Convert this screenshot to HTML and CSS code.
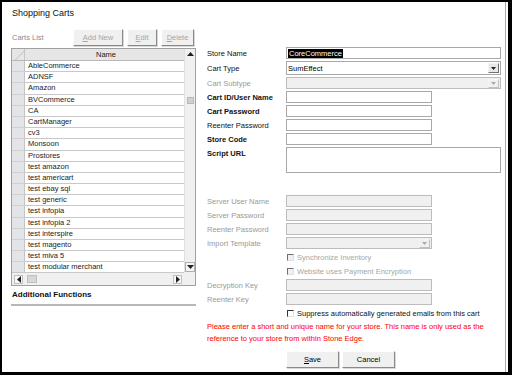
FILE: index.html
```html
<!DOCTYPE html>
<html lang="en">
<head>
  <meta charset="UTF-8" />
  <title>Shopping Carts</title>
  <link rel="stylesheet" href="styles.css">
</head>
<body>
  <div class="window">
    <div class="frame">
      <h1 class="title">Shopping Carts</h1>

      <div class="content">
        <div class="left">
          <div class="toolbar">
            <span class="list-label">Carts List</span>
            <div class="tool-buttons">
              <button class="btn btn-disabled w-add"><u>A</u>dd New</button>
              <button class="btn btn-disabled w-edit"><u>E</u>dit</button>
              <button class="btn btn-disabled w-del"><u>D</u>elete</button>
            </div>
          </div>

          <div class="grid">
            <div class="grid-body">
              <div class="grid-row grid-head">
                <div class="sel sel-corner"></div>
                <div class="cell head-cell">Name</div>
              </div>
              <div class="grid-row"><div class="sel"></div><div class="cell">AbleCommerce</div></div>
              <div class="grid-row"><div class="sel"></div><div class="cell">ADNSF</div></div>
              <div class="grid-row"><div class="sel"></div><div class="cell">Amazon</div></div>
              <div class="grid-row"><div class="sel"></div><div class="cell">BVCommerce</div></div>
              <div class="grid-row"><div class="sel"></div><div class="cell">CA</div></div>
              <div class="grid-row"><div class="sel"></div><div class="cell">CartManager</div></div>
              <div class="grid-row"><div class="sel"></div><div class="cell">cv3</div></div>
              <div class="grid-row"><div class="sel"></div><div class="cell">Monsoon</div></div>
              <div class="grid-row"><div class="sel"></div><div class="cell">Prostores</div></div>
              <div class="grid-row"><div class="sel"></div><div class="cell">test amazon</div></div>
              <div class="grid-row"><div class="sel"></div><div class="cell">test americart</div></div>
              <div class="grid-row"><div class="sel"></div><div class="cell">test ebay sql</div></div>
              <div class="grid-row"><div class="sel"></div><div class="cell">test generic</div></div>
              <div class="grid-row"><div class="sel"></div><div class="cell">test infopia</div></div>
              <div class="grid-row"><div class="sel"></div><div class="cell">test infopia 2</div></div>
              <div class="grid-row"><div class="sel"></div><div class="cell">test interspire</div></div>
              <div class="grid-row"><div class="sel"></div><div class="cell">test magento</div></div>
              <div class="grid-row"><div class="sel"></div><div class="cell">test miva 5</div></div>
              <div class="grid-row"><div class="sel"></div><div class="cell">test modular merchant</div></div>
            </div>

            <div class="vscroll">
              <div class="arrow-box">
                <svg width="7" height="4" viewBox="0 0 7 4"><path d="M0 4 L3.5 0 L7 4 Z" fill="#222"/></svg>
              </div>
              <div class="vtrack"><div class="vthumb"></div></div>
              <div class="arrow-box arrow-boxed">
                <svg width="7" height="4" viewBox="0 0 7 4"><path d="M0 0 L3.5 4 L7 0 Z" fill="#222"/></svg>
              </div>
            </div>

            <div class="hscroll">
              <div class="harrow">
                <svg width="4" height="7" viewBox="0 0 4 7"><path d="M4 0 L0 3.5 L4 7 Z" fill="#222"/></svg>
              </div>
              <div class="hthumb"></div>
              <div class="htrack"></div>
              <div class="harrow">
                <svg width="4" height="7" viewBox="0 0 4 7"><path d="M0 0 L4 3.5 L0 7 Z" fill="#222"/></svg>
              </div>
            </div>
            <div class="corner"></div>
          </div>

          <div class="section-title">Additional Functions</div>
        </div>

        <div class="right">
          <div class="form-row h12">
            <label class="lbl">Store Name</label>
            <div class="field wide"><span class="selected-text">CoreCommerce</span></div>
          </div>
          <div class="form-row h14">
            <label class="lbl">Cart Type</label>
            <div class="field wide select">
              <span>SumEffect</span>
              <span class="drop">
                <svg width="5" height="3" viewBox="0 0 5 3"><path d="M0 0 L2.5 3 L5 0 Z" fill="#222"/></svg>
              </span>
            </div>
          </div>
          <div class="form-row h12">
            <label class="lbl lbl-off">Cart Subtype</label>
            <div class="field wide select off">
              <span></span>
              <span class="drop drop-off">
                <svg width="5" height="3" viewBox="0 0 5 3"><path d="M0 0 L2.5 3 L5 0 Z" fill="#aaa"/></svg>
              </span>
            </div>
          </div>
          <div class="form-row h12">
            <label class="lbl bold">Cart ID/User Name</label>
            <div class="field narrow"></div>
          </div>
          <div class="form-row h12">
            <label class="lbl bold">Cart Password</label>
            <div class="field narrow"></div>
          </div>
          <div class="form-row h12">
            <label class="lbl">Reenter Password</label>
            <div class="field narrow"></div>
          </div>
          <div class="form-row h12">
            <label class="lbl bold">Store Code</label>
            <div class="field narrow"></div>
          </div>
          <div class="form-row h26 top">
            <label class="lbl bold">Script URL</label>
            <div class="field wide area"></div>
          </div>

          <div class="form-row h12 gap-before">
            <label class="lbl lbl-off">Server User Name</label>
            <div class="field narrow off"></div>
          </div>
          <div class="form-row h12">
            <label class="lbl lbl-off">Server Password</label>
            <div class="field narrow off"></div>
          </div>
          <div class="form-row h12">
            <label class="lbl lbl-off">Reenter Password</label>
            <div class="field narrow off"></div>
          </div>
          <div class="form-row h12">
            <label class="lbl lbl-off">Import Template</label>
            <div class="field narrow select off">
              <span></span>
              <span class="drop drop-off">
                <svg width="5" height="3" viewBox="0 0 5 3"><path d="M0 0 L2.5 3 L5 0 Z" fill="#aaa"/></svg>
              </span>
            </div>
          </div>
          <div class="form-row h12">
            <span class="lbl"></span>
            <div class="check-line off"><span class="box"></span>Synchronize Inventory</div>
          </div>
          <div class="form-row h12">
            <span class="lbl"></span>
            <div class="check-line off"><span class="box"></span>Website uses Payment Encryption</div>
          </div>
          <div class="form-row h12">
            <label class="lbl lbl-off">Decryption Key</label>
            <div class="field narrow off"></div>
          </div>
          <div class="form-row h12">
            <label class="lbl lbl-off">Reenter Key</label>
            <div class="field narrow off"></div>
          </div>
          <div class="form-row h12">
            <span class="lbl"></span>
            <div class="check-line"><span class="box"></span>Suppress automatically generated emails from this cart</div>
          </div>

          <p class="hint">Please enter a short and unique name for your store. This name is only used as the reference to your store from within Stone Edge.</p>

          <div class="actions">
            <button class="btn w-save"><u>S</u>ave</button>
            <button class="btn w-save">Cancel</button>
          </div>
        </div>
      </div>
    </div>
  </div>
</body>
</html>
```

FILE: styles.css
```css
* {
  margin: 0;
  padding: 0;
  box-sizing: border-box;
}

html,
body {
  background: #000;
}

body {
  width: 512px;
  height: 375px;
  overflow: hidden;
  font-family: "Liberation Sans", Arial, sans-serif;
  font-size: 7.5px;
  color: #000;
}

.window {
  margin: 2px 0 0 2px;
  width: 506px;
  height: 370px;
  background: #fff;
}

.frame {
  width: 504px;
  height: 100%;
  border-right: 1px solid #a8a8a8;
  padding: 6px 0 0 9px;
}

.title {
  font-size: 9px;
  font-weight: normal;
  line-height: 11px;
  margin-left: 1px;
  color: #111;
}

.content {
  display: flex;
  margin-top: 10px;
}

/* left column: carts list */
.left {
  width: 185px;
}

.toolbar {
  display: flex;
  align-items: center;
  height: 17px;
}

.list-label {
  flex: 1;
  padding-left: 1px;
  color: #8c8c8c;
}

.tool-buttons {
  display: flex;
  gap: 4px;
  margin-right: 2px;
}

.btn {
  height: 17px;
  font-family: inherit;
  font-size: 7.5px;
  background: #f0f0f0;
  border: 1px solid;
  border-color: #fff #8a8a8a #8a8a8a #fff;
  box-shadow: 1px 1px 0 #d8d8d8;
  color: #000;
}

.btn-disabled {
  color: #a6a6a6;
}

.w-add { width: 50px; }
.w-edit { width: 30px; }
.w-del { width: 33px; }
.w-save { width: 53px; height: 17px; }

.grid {
  margin-top: 2px;
  height: 238px;
  border: 1px solid #a0a0a0;
  display: grid;
  grid-template-columns: 1fr 11px;
  grid-template-rows: 1fr 13px;
  overflow: hidden;
}

.grid-body {
  overflow: hidden;
}

.grid-row {
  display: flex;
  height: 11.2px;
  line-height: 10.5px;
}

.grid-head {
  height: 12px;
  line-height: 11px;
  background: #e6e6e6;
  border-bottom: 1px solid #b8b8b8;
}

.sel {
  width: 13px;
  background: #e2e4e8;
  border-right: 1px solid #c4c4c4;
  border-bottom: 1px solid #d0d0d0;
}

.sel-corner {
  background: linear-gradient(135deg, transparent 60%, #c8c8c8 61%, transparent 68%) #e6e6e6;
  border-bottom: none;
}

.cell {
  flex: 1;
  padding-left: 3px;
  border-bottom: 1px solid #c8c8c8;
  white-space: nowrap;
  color: #1a1a1a;
}

.head-cell {
  text-align: center;
  border-bottom: none;
}

.vscroll {
  display: flex;
  flex-direction: column;
  background: #f0f0f0;
  border-left: 1px solid #e0e0e0;
}

.arrow-box {
  height: 10px;
  display: flex;
  align-items: center;
  justify-content: center;
}

.arrow-boxed {
  border: 1px solid #b0b0b0;
  background: #f4f4f4;
}

.vtrack {
  flex: 1;
  padding-top: 38px;
}

.vthumb {
  width: 7px;
  height: 7px;
  margin: 0 auto;
  background: #d0d0d0;
  border: 1px solid #b8b8b8;
}

.hscroll {
  display: flex;
  align-items: center;
  gap: 2px;
  padding: 0 2px;
  background: #f0f0f0;
  border-top: 1px solid #c8c8c8;
}

.harrow {
  width: 9px;
  height: 9px;
  display: flex;
  align-items: center;
  justify-content: center;
  border: 1px solid #c0c0c0;
  background: #f8f8f8;
}

.hthumb {
  width: 10px;
  height: 8px;
  margin-left: 2px;
  background: #d8d8d8;
  border: 1px solid #c0c0c0;
}

.htrack {
  flex: 1;
}

.corner {
  background: #f0f0f0;
}

.section-title {
  margin-top: 4px;
  padding: 0 0 4px 1px;
  font-weight: bold;
  font-size: 8px;
  line-height: 10px;
  border-bottom: 2px solid #b8b8b8;
  color: #111;
}

/* right column: cart form */
.right {
  margin-left: 11px;
  width: 295px;
  padding-top: 18px;
  display: flex;
  flex-direction: column;
  gap: 2px;
}

.form-row {
  display: flex;
  align-items: center;
}

.form-row.top {
  align-items: flex-start;
}

.h12 { height: 12px; }
.h14 { height: 14px; }
.h26 { height: 26px; }

.gap-before {
  margin-top: 20px;
}

.lbl {
  width: 79px;
  color: #111;
  white-space: nowrap;
}

.top .lbl {
  padding-top: 2px;
}

.bold {
  font-weight: bold;
}

.lbl-off {
  color: #9a9a9a;
}

.field {
  height: 100%;
  border: 1px solid #a8a8a8;
  background: #fff;
  display: flex;
  align-items: center;
  padding-left: 1px;
}

.wide { width: 215px; }
.narrow { width: 146px; }

.field.off {
  background: #f0f0f0;
  border-color: #bcbcbc;
}

.select {
  justify-content: space-between;
  padding-right: 1px;
}

.drop {
  width: 11px;
  height: 10px;
  display: flex;
  align-items: center;
  justify-content: center;
  border: 1px solid;
  border-color: #f4f4f4 #707070 #707070 #f4f4f4;
  background: #e8e8e8;
}

.drop-off {
  height: 9px;
  border-color: #f4f4f4 #c0c0c0 #c0c0c0 #f4f4f4;
  background: #f0f0f0;
}

.selected-text {
  background: #000;
  color: #fff;
  padding: 0 1px;
  line-height: 9px;
}

.check-line {
  display: flex;
  align-items: center;
  gap: 3px;
  padding-left: 1px;
  white-space: nowrap;
  color: #111;
}

.check-line.off {
  color: #a6a6a6;
}

.box {
  width: 7px;
  height: 7px;
  border-top: 1px solid #333;
  border-left: 1px solid #333;
  border-right: 1px solid #e0e0e0;
  border-bottom: 1px solid #e0e0e0;
  background: #fff;
}

.off .box {
  border-top-color: #707070;
  border-left-color: #707070;
  background: #f0f0f0;
}

.hint {
  color: #f00;
  line-height: 12px;
  width: 300px;
}

.actions {
  display: flex;
  gap: 3px;
  margin: 4px 0 0 79px;
}
```
